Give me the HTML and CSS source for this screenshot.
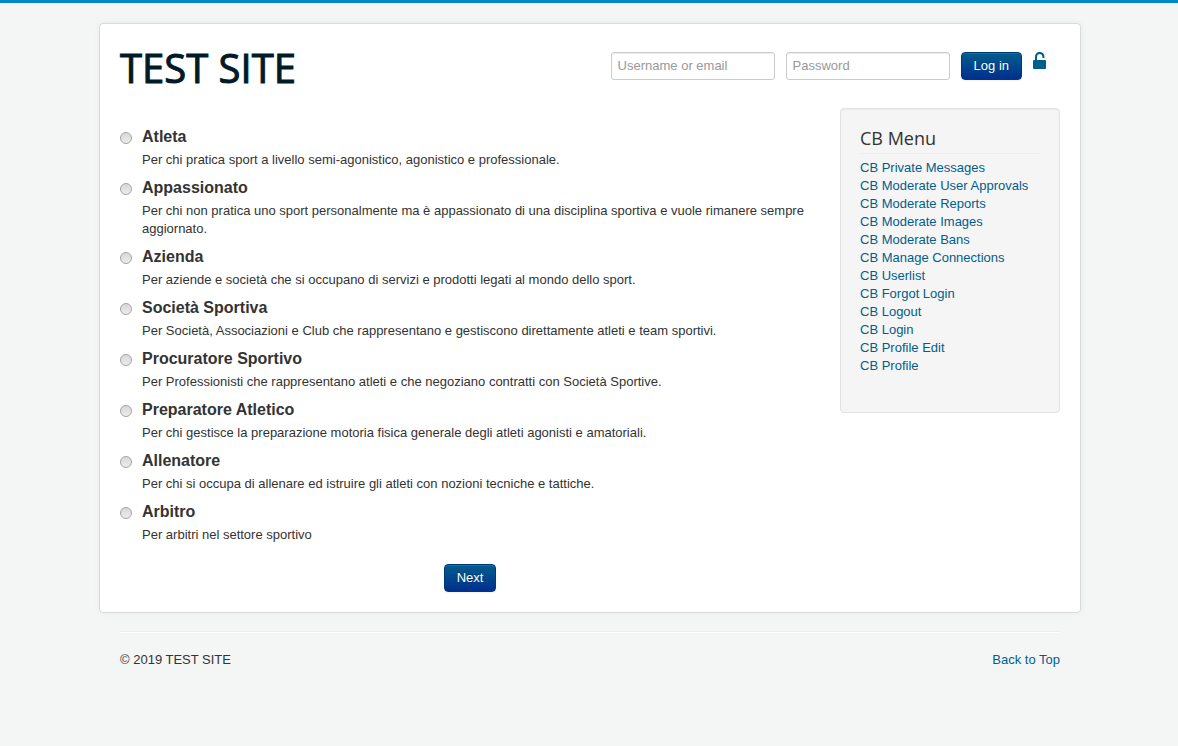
FILE: index.html
```html
<!DOCTYPE html>
<html lang="it">
<head>
<meta charset="utf-8">
<meta name="viewport" content="width=device-width, initial-scale=1">
<title>TEST SITE</title>
<link rel="stylesheet" href="styles.css">
</head>
<body id="top">
<div class="container">
  <header class="header">
    <a class="brand" href="#">TEST SITE</a>
    <form class="login">
      <input class="field" type="text" placeholder="Username or email" aria-label="Username or email">
      <input class="field" type="password" placeholder="Password" aria-label="Password">
      <button class="btn" type="submit">Log in</button>
      <a class="forgot" href="#" aria-label="Forgot Login?">
        <svg width="14" height="18" viewBox="0 0 14 18" aria-hidden="true"><path d="M3 9V4.8a3.7 3.7 0 0 1 7.4-.4V6" fill="none" stroke="currentColor" stroke-width="2"/><rect x="0" y="8" width="13" height="9" rx="1" fill="currentColor"/></svg>
      </a>
    </form>
  </header>
  <div class="columns">
    <main class="main">
      <form>
        <ul class="types">
          <li class="type"><input type="radio" name="type" id="t1"><label for="t1">Atleta</label><p>Per chi pratica sport a livello semi-agonistico, agonistico e professionale.</p></li>
          <li class="type"><input type="radio" name="type" id="t2"><label for="t2">Appassionato</label><p>Per chi non pratica uno sport personalmente ma è appassionato di una disciplina sportiva e vuole rimanere sempre aggiornato.</p></li>
          <li class="type"><input type="radio" name="type" id="t3"><label for="t3">Azienda</label><p>Per aziende e società che si occupano di servizi e prodotti legati al mondo dello sport.</p></li>
          <li class="type"><input type="radio" name="type" id="t4"><label for="t4">Società Sportiva</label><p>Per Società, Associazioni e Club che rappresentano e gestiscono direttamente atleti e team sportivi.</p></li>
          <li class="type"><input type="radio" name="type" id="t5"><label for="t5">Procuratore Sportivo</label><p>Per Professionisti che rappresentano atleti e che negoziano contratti con Società Sportive.</p></li>
          <li class="type"><input type="radio" name="type" id="t6"><label for="t6">Preparatore Atletico</label><p>Per chi gestisce la preparazione motoria fisica generale degli atleti agonisti e amatoriali.</p></li>
          <li class="type"><input type="radio" name="type" id="t7"><label for="t7">Allenatore</label><p>Per chi si occupa di allenare ed istruire gli atleti con nozioni tecniche e tattiche.</p></li>
          <li class="type"><input type="radio" name="type" id="t8"><label for="t8">Arbitro</label><p>Per arbitri nel settore sportivo</p></li>
        </ul>
        <div class="actions"><button class="btn" type="button">Next</button></div>
      </form>
    </main>
    <aside class="well">
      <h3>CB Menu</h3>
      <ul class="menu">
        <li><a href="#">CB Private Messages</a></li>
        <li><a href="#">CB Moderate User Approvals</a></li>
        <li><a href="#">CB Moderate Reports</a></li>
        <li><a href="#">CB Moderate Images</a></li>
        <li><a href="#">CB Moderate Bans</a></li>
        <li><a href="#">CB Manage Connections</a></li>
        <li><a href="#">CB Userlist</a></li>
        <li><a href="#">CB Forgot Login</a></li>
        <li><a href="#">CB Logout</a></li>
        <li><a href="#">CB Login</a></li>
        <li><a href="#">CB Profile Edit</a></li>
        <li><a href="#">CB Profile</a></li>
      </ul>
    </aside>
  </div>
</div>
<footer class="footer">
  <p>© 2019 TEST SITE</p>
  <a href="#top">Back to Top</a>
</footer>
</body>
</html>
```
FILE: styles.css
```css
* { box-sizing: border-box; }

body {
  margin: 0;
  padding: 20px 18px 20px 20px;
  border-top: 3px solid #0088cc;
  background: #f4f6f6;
  color: #333;
  font: 13px/18px "Liberation Sans", Arial, sans-serif;
}

a { color: #005e8d; text-decoration: none; }
a:hover { text-decoration: underline; }
ul { list-style: none; margin: 0; padding: 0; }
p { margin: 0; }
button, input { font: inherit; }

.container {
  max-width: 982px;
  margin: 0 auto;
  padding: 20px;
  background: #fff;
  border: 1px solid #dadada;
  border-radius: 4px;
  box-shadow: 0 0 6px rgba(0, 0, 0, .05);
}

.header {
  display: flex;
  justify-content: space-between;
  align-items: flex-start;
  margin-bottom: 16px;
}

.brand {
  color: #001a27;
  font: 40px/48px "Open Sans", sans-serif;
  -webkit-text-stroke: 1px #001a27;
}

.login {
  display: flex;
  gap: 11px;
  padding: 8px 13px 0 0;
}

.field {
  width: 164px;
  height: 28px;
  padding: 3px 6px 5px;
  border: 1px solid #ccc;
  border-radius: 3px;
  background: #fff;
  box-shadow: inset 0 1px 1px rgba(0, 0, 0, .075);
}
.field::placeholder { color: #999; opacity: 1; }

.btn {
  height: 28px;
  padding: 0 12px;
  border: 1px solid #003775;
  border-radius: 4px;
  background: linear-gradient(#005e8d, #002f8d);
  color: #fff;
  font-size: 13px;
  text-shadow: 0 -1px 0 rgba(0, 0, 0, .25);
  box-shadow: inset 0 1px 0 rgba(255, 255, 255, .1), 0 1px 2px rgba(0, 0, 0, .05);
}

.forgot svg { display: block; }

.columns {
  display: flex;
  gap: 20px;
  align-items: flex-start;
}

.main { flex: 1; padding-top: 19px; }

.types { display: grid; gap: 9px; }

.type {
  display: grid;
  grid-template-columns: 12px 1fr;
  column-gap: 10px;
  row-gap: 4px;
}
.type label { font-size: 16px; line-height: 20px; font-weight: bold; }
.type p { grid-column: 2; }
.type input {
  appearance: none;
  width: 12px;
  height: 12px;
  margin: 5px 0 0;
  border: 1px solid #a3a3a3;
  border-radius: 50%;
  background: linear-gradient(#d8d8d8, #ececec);
}
.type input:checked { background: radial-gradient(#333 35%, #e4e4e4 40%); }

.actions { padding-top: 20px; text-align: center; }
.actions .btn { display: inline-block; vertical-align: top; }

.well {
  width: 220px;
  padding: 18px 19px 37px;
  border: 1px solid #e3e3e3;
  border-radius: 4px;
  background: #f5f5f5;
  box-shadow: inset 0 1px 1px rgba(0, 0, 0, .05);
}
.well h3 {
  margin: 0 0 5px;
  padding-bottom: 4px;
  border-bottom: 1px solid #eee;
  font: 18px/22px "Open Sans", sans-serif;
}

.footer {
  display: flex;
  justify-content: space-between;
  max-width: 940px;
  margin: 18px auto 0;
  padding-top: 19px;
  border-top: 1px solid #eee;
  box-shadow: inset 0 1px 0 #fff;
}
```
